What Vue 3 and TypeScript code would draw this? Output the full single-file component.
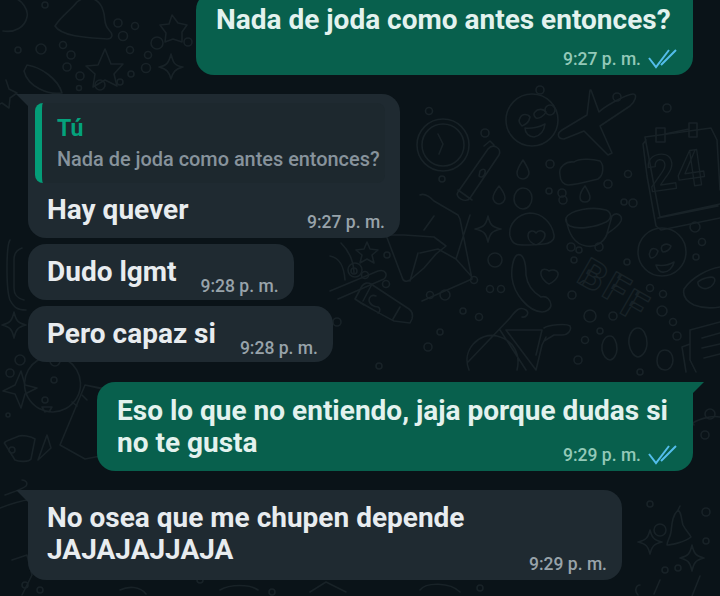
<template>
  <div class="screen">
    <!-- wallpaper doodles -->
    <svg class="wallpaper" width="720" height="596" viewBox="0 0 720 596" fill="none" stroke="#182227" stroke-width="1.6" stroke-linecap="round" stroke-linejoin="round">
      <circle v-for="(c, i) in dots" :key="i" :cx="c[0]" :cy="c[1]" :r="c[2]" />
      <path v-for="(d, i) in doodles" :key="'p' + i" :d="d" />
      <text class="doodle-text big" transform="translate(650 192) rotate(-8)">24</text>
      <text class="doodle-text" transform="translate(575 281) rotate(30)">B</text>
      <text class="doodle-text" transform="translate(600 295) rotate(30)">F</text>
      <text class="doodle-text" transform="translate(618 312) rotate(30)">F</text>
    </svg>

    <div class="chat">
      <div class="bubble out first">
        <p class="text">Nada de joda como antes entonces?</p>
        <div class="meta below">
          <span>9:27 p. m.</span>
          <svg class="ticks" width="30" height="20" viewBox="0 0 30 20" fill="none" stroke="#53bdeb" stroke-width="2">
            <path d="M1 9l7 9L21 1M13 16L28 1" />
          </svg>
        </div>
      </div>

      <div class="bubble in tail reply">
        <div class="quote">
          <div class="quote-name">Tú</div>
          <div class="quote-text">Nada de joda como antes entonces?</div>
        </div>
        <div class="row spread">
          <p class="text">Hay quever</p>
          <span class="meta">9:27 p. m.</span>
        </div>
      </div>

      <div class="bubble in short">
        <div class="row">
          <p class="text">Dudo lgmt</p>
          <span class="meta">9:28 p. m.</span>
        </div>
      </div>

      <div class="bubble in short">
        <div class="row">
          <p class="text">Pero capaz si</p>
          <span class="meta">9:28 p. m.</span>
        </div>
      </div>

      <div class="bubble out tail second">
        <p class="text">Eso lo que no entiendo, jaja porque dudas si<br />no te gusta</p>
        <div class="meta overlap">
          <span>9:29 p. m.</span>
          <svg class="ticks" width="30" height="20" viewBox="0 0 30 20" fill="none" stroke="#53bdeb" stroke-width="2">
            <path d="M1 9l7 9L21 1M13 16L28 1" />
          </svg>
        </div>
      </div>

      <div class="bubble in tail last">
        <div class="row spread">
          <p class="text">No osea que me chupen depende<br />JAJAJAJJAJA</p>
          <span class="meta">9:29 p. m.</span>
        </div>
      </div>
    </div>
  </div>
</template>

<script setup lang="ts">
type Dot = [number, number, number]

const dots: Dot[] = [
  [45, 5, 3], [41, 49, 5], [18, 50, 3], [63, 45, 3.5], [71, 55, 4], [67, 67, 4], [80, 76, 4], [100, 85, 5], [79, 88, 2.5],
  [118, 23, 4], [135, 26, 3.5], [123, 36, 4.5], [157, 43, 6], [130, 50, 3.5], [148, 55, 3.5], [146, 68, 4.5], [131, 74, 3],
  [120, 82, 3], [188, 42, 4], [429, 111, 3.5], [485, 133, 4], [442, 179, 3], [550, 110, 5], [540, 90, 4],
  [617, 97, 4], [667, 108, 4], [550, 164, 4], [563, 200, 4], [549, 191, 3], [562, 193, 4], [608, 184, 4], [628, 174, 3.5],
  [624, 202, 3], [633, 203, 4], [599, 247, 4], [579, 250, 3], [571, 247, 4], [574, 260, 3], [627, 262, 3], [695, 227, 5],
  [702, 242, 3.5], [696, 257, 3], [495, 260, 7], [474, 280, 3.5], [490, 289, 3.5], [501, 289, 3.5], [445, 295, 5], [430, 295, 3.5],
  [463, 311, 3], [479, 317, 3.5], [572, 295, 4], [590, 316, 6], [613, 316, 4], [650, 288, 3.5], [663, 294, 3.5], [662, 311, 5],
  [673, 322, 3.5], [677, 336, 4], [600, 331, 3], [585, 340, 3.5], [578, 360, 4], [428, 347, 4], [440, 332, 3], [355, 270, 7],
  [354, 271, 3], [365, 275, 3.5], [386, 284, 3.5], [387, 255, 3], [337, 322, 4], [379, 366, 3], [10, 373, 4], [54, 380, 3], [45, 400, 3],
  [20, 360, 5], [55, 361, 5], [12, 450, 3], [8, 415, 2], [640, 372, 3], [632, 425, 3], [710, 414, 5], [705, 435, 4], [650, 504, 3],
  [660, 530, 6], [706, 512, 4], [706, 541, 3], [665, 570, 3], [678, 568, 3], [40, 590, 3], [25, 585, 3], [200, 580, 3], [480, 588, 3], [272, 592, 3],
]

const doodles: string[] = [
  // poop emoji, top left
  'M55 26c6-10 16-16 22-24 10-8 22-4 26 8 3 8 0 14 6 20 5 5 3 9-2 9-10-1-45-1-52-13z',
  'M3 31c12 2 22-4 24-14 2-8-6-16-10-18',
  // stars
  'M105 49l6 15 12 0-9 10 3 12-12-6-12 7 2-13-9-8 12-1z',
  'M172 15l6 8 9 2-5 7 0 10-9-3-8 3 1-9-6-8 9-1z',
  'M171 54c2 8 3 12 12 13-8 2-10 5-12 12-2-7-4-10-12-12 8-1 10-5 12-13z',
  'M6 80l3 9 8 4-7 5-1 10-7-5-5 2',
  // leaf shape
  'M27 65c14 2 31 14 35 28-14 2-34-6-38-22z',
  // clock
  'M464 145a21 21 0 1 1-42 0a21 21 0 1 1 42 0zM469 145a26 26 0 1 1-52 0a26 26 0 1 1 52 0z',
  'M438 134l5 10-4 10',
  // heart emoji
  'M558 120a26 26 0 1 1-52 0a26 26 0 1 1 52 0z',
  'M520 118c2-5 8-4 10-1-1 5-5 8-8 9-2-2-4-5-2-8zM535 112c3-4 9-3 11 0-2 4-7 7-10 6-2-2-3-4-1-6zM525 128c6 1 15-1 20-4-1 8-6 12-11 13-5 0-9-4-9-9z',
  // plane
  'M590 90l-3 25-25 15c-6 4-4 9 2 9l20-8 24 24 4-2-12-27 30-20c5-4 8-12 3-12-6 0-28 12-34 18l-8-22z',
  // calendar
  'M645 137l66-9 6 12 3 50M645 137l13 70 2 10 60-13M646 140l-3 4 4 32 9 50 5 4 59-12M658 218l60-12',
  'M656 128h9v14h-9zM689 123h8v14h-8zM665 134l24-5',
  // bottle
  'M458 192l30-43c5-6 14-1 11 6l-29 43c-4 6-16-1-12-6zM484 146l6-5 4 4M458 190l14 10M480 171c3-3 6-2 5 2-1 4-4 5-6 3z',
  // drops
  'M523 160c-4 6-6 10-6 13 0 4 3 6 6 6s6-3 6-6c0-4-3-8-6-13zM499 186c-4 5-6 9-6 12 0 3 3 6 6 6s6-3 6-6c0-3-2-7-6-12zM585 186c-4 5-5 8-5 11 0 3 2 5 5 5s5-2 5-5c0-3-2-6-5-11zM523 188c-5 0-9 5-9 11s5 10 9 10c5 0 9-5 9-11s-4-10-9-10z',
  // cloud
  'M560 175c-2-8 6-14 14-13 6-5 22-2 26-1 4 4 4 14-2 18-8 2-22 6-30 6-4 0-8-4-8-10z',
  // coffee
  'M566 218c4-8 26-12 40-8 5 2 7 8 0 12-10 5-28 8-36 4-3-2-5-5-4-8zM566 218c2 14 8 26 20 28 10 2 20-4 22-16l4-14c5-5 11 0 9 5-3 6-9 9-13 12',
  // sparkle by envelope
  'M488 216c2 9 4 11 13 13-9 2-11 4-13 13-2-9-4-11-13-13 9-2 11-4 13-13z',
  // heart blob
  'M510 236c-2-12 8-22 20-23 12 0 22 10 24 22 1 6-6 9-10 9-12 1-24 2-28 0-3-1-5-4-6-8zM528 236c0-6 6-6 8-3 3-4 9-2 9 2 0 5-6 9-9 10-3-1-8-4-8-9z',
  // envelope
  'M420 195c4-2 8 0 14 6l24 14 2 4 12 60-50 22M470 215l-14 44 16 18M420 253l18-4 18 10M424 230l10-14',
  // emoji
  'M686 252a24 24 0 1 1-48 0a24 24 0 1 1 48 0z',
  'M650 252c1-5 6-4 8-1-1 4-4 7-7 7-2-2-2-4-1-6zM662 246c3-3 7-2 9 0-1 4-5 6-8 6-2-2-2-4-1-6zM656 265c6 1 13 0 18-3-1 6-6 10-10 10-4 1-7-3-8-7z',
  // phone + heart
  'M517 255c6-2 9 6 9 20 1 8 5 16 15 22 6-2 10 4 10 8s-5 7-9 7c-14-1-28-18-30-34-1-9 1-20 5-23z',
  'M541 272c1-4 6-3 8-1 3-2 8-1 9 2 1 5-6 10-9 11-3-1-9-7-8-12z',
  // donut
  'M684 289c8-12 24-20 36-22M684 289c-2 8 4 13 10 16 10 4 20 3 26 2M698 282c4-4 14-6 16-4s0 8-6 10c-5 2-11-2-10-6z',
  // bike
  'M469 370c-8-20 10-38 28-34 16 4 24 18 20 34M468 362l42-44c6-8 10-12 16-8 4 3 0 8-4 7M500 330l26 40M506 330l30 40 6-25 4-8M506 330l36 0-6 25M544 328c4-3 22-5 26-2 2 4-2 9-8 9h-8l-10 6',
  // balloons
  'M610 336c-6 0-9 8-8 14 1 6 5 10 8 10s7-5 7-11c0-7-3-13-7-13zM638 328c-6 0-10 8-9 16 1 8 6 13 9 13s9-5 9-14c0-8-4-15-9-15zM665 350c-6 0-8 6-8 11s3 9 8 9 8-5 8-10-3-10-8-10z',
  // notebook
  'M690 330l30-8M690 330l0 30 6 12M702 338l18-5M702 348l18-4M704 358l16-4M690 344l-8 3 4 25',
  // left side, shapes between bubbles
  'M10 240c-4 6-4 50 0 60 4 8 8 10 16 10M22 248c-6 2-8 6-8 12v28c0 6 2 10 10 12',
  'M14 312c2 9 4 11 12 13-8 2-10 4-12 13-2-9-4-11-12-13 8-2 10-4 12-13z',
  // center right
  'M367 242l3 7 8 1-6 5 2 8-7-4-7 4 2-8-6-5 8-1z',
  'M386 235l16 42c1 5 5 5 8 3l14-12 12-14 10-8-12-9-30-2zM410 281l8-28',
  'M355 299l7-13c2-3 6-4 9-2l38 25c3 2 4 6 3 10l-2 4-16-2c-6-3-30-16-39-22zM355 299l9 6M372 284l-9 17M400 307l-7 12',
  'M330 291l48-20c8-2 10 4 6 8l-46 20',
  'M376 296c-4-2-7 1-7 4 0 4 5 7 9 7 2 1 3 4 0 6',
  'M341 243a44 44 0 0 1 13 30M330 256c10 2 14 10 15 24',
  // lower left
  'M15 385l6-14 4 14 12 3-12 6-4 14-6-14-12-3zM25 388',
  'M85 385l-25 60 25 14 26-5 22-60zM85 385l26 6',
  'M72 402l5 4M82 395l5 5',
  'M52 412a28 28 0 1 1 1 0zM45 412l-3-5h10l-3 5M47 435l-9 25 13-12z',
  'M5 444c-3-2 5-4 14-8 3-1 12 0 16 3l-4 20c-2 3-12 3-16 1z',
  'M5 495c8-3 18-6 21-9 2-3 0-6-4-6M0 508c10-4 24-8 28-8M12 560l15-5 5 20-10 20',
  // lower right bell, stars, pin
  'M678 510c-6 6-6 14-7 22-1 6-4 9-4 13 4 0 18-3 24-8-2-4-5-6-8-12-2-6-1-12-5-15zM678 510l2-4',
  'M650 530c2 8 4 10 12 12-8 2-10 4-12 12-2-8-4-10-12-12 8-2 10-4 12-12z',
  'M692 545c2 9 4 11 12 13-8 2-10 4-12 13-2-9-4-11-12-13 8-2 10-4 12-13z',
  'M660 580l-6 14M640 585c-4 0-6 6-2 10M700 576l-8 20',
  'M690 425c6-5 20-10 30-8M668 405l14 30 8-16 4 6',
  // bottom strip
  'M220 590c10-6 30-6 38 0M310 592l16-10 20 10M420 590c6-8 30-8 40 2M120 590c8-4 20-4 26 4',
]
</script>

<style>
html,
body {
  margin: 0;
  background: #0a1318;
}
</style>

<style scoped>
.screen {
  position: relative;
  width: 720px;
  height: 596px;
  overflow: hidden;
  background: #0a1318;
  font-family: Roboto, "Liberation Sans", sans-serif;
}
.wallpaper {
  position: absolute;
  left: 0;
  top: 0;
}
.doodle-text {
  font-family: Roboto, sans-serif;
  font-size: 40px;
  font-weight: 700;
  stroke-width: 1.4;
}
.doodle-text.big {
  font-size: 50px;
}
.chat {
  position: relative;
  display: flex;
  flex-direction: column;
  margin-top: -8px;
}
.bubble {
  position: relative;
  box-sizing: border-box;
  border-radius: 18px;
}
.bubble.in {
  align-self: flex-start;
  margin-left: 28px;
  background: #1f2a31;
  padding: 0 15px 0 19px;
  color: #e8ecef;
}
.bubble.out {
  align-self: flex-end;
  margin-right: 27px;
  background: #08604d;
  padding: 0 23px 0 20px;
  color: #e3f2ee;
}
.bubble.tail.in {
  border-top-left-radius: 0;
}
.bubble.tail.out {
  border-top-right-radius: 0;
}
/* little tail in the corner of the first bubble of a group */
.bubble.tail::before {
  content: "";
  position: absolute;
  top: 0;
  width: 12px;
  height: 12px;
}
.bubble.in.tail::before {
  left: -12px;
  background: #1f2a31;
  clip-path: polygon(0 0, 100% 0, 100% 100%);
}
.bubble.out.tail::before {
  right: -11px;
  background: #08604d;
  clip-path: polygon(0 0, 100% 0, 0 100%);
}
.bubble.first {
  width: 497px;
  height: 83px;
  padding-top: 12px;
  border-top-right-radius: 0;
}
.bubble.second {
  width: 596px;
  height: 89px;
  margin-top: 20px;
  padding-top: 13px;
}
.bubble.reply {
  width: 372px;
  height: 144px;
  margin-top: 19px;
  padding: 9px 15px 0 7px;
}
.bubble.short {
  height: 56px;
  margin-top: 6px;
  padding-top: 12px;
}
.bubble.last {
  width: 594px;
  height: 90px;
  margin-top: 19px;
  padding-top: 12px;
}
.text {
  margin: 0;
  font-size: 28px;
  font-weight: 700;
  line-height: 32px;
  white-space: nowrap;
}
.row {
  display: flex;
  align-items: flex-end;
  gap: 24px;
}
.row.spread {
  justify-content: space-between;
}
.meta {
  display: flex;
  align-items: center;
  font-size: 17.5px;
  font-weight: 500;
  line-height: 20px;
  white-space: nowrap;
}
.bubble.in .meta {
  color: #98a3aa;
  margin-bottom: -8px;
}
.bubble.reply .meta {
  margin-bottom: -6px;
}
.bubble.out .meta {
  justify-content: flex-end;
  color: #93c9b8;
  margin-right: -8px;
}
.meta.below {
  margin-top: 13px;
}
.meta.overlap {
  margin-top: -14px;
}
.ticks {
  margin-left: 7px;
}
.quote {
  box-sizing: border-box;
  height: 80px;
  padding: 12px 0 0 15px;
  border-left: 7px solid #049d78;
  border-radius: 8px;
  background: #1d282e;
  margin-bottom: 11px;
}
.quote-name {
  font-size: 23px;
  font-weight: 700;
  line-height: 28px;
  color: #04a27c;
}
.quote-text {
  margin-top: 4px;
  font-size: 19.9px;
  font-weight: 500;
  line-height: 26px;
  color: #87939c;
  white-space: nowrap;
}
.reply .row {
  padding-left: 12px;
}
</style>
